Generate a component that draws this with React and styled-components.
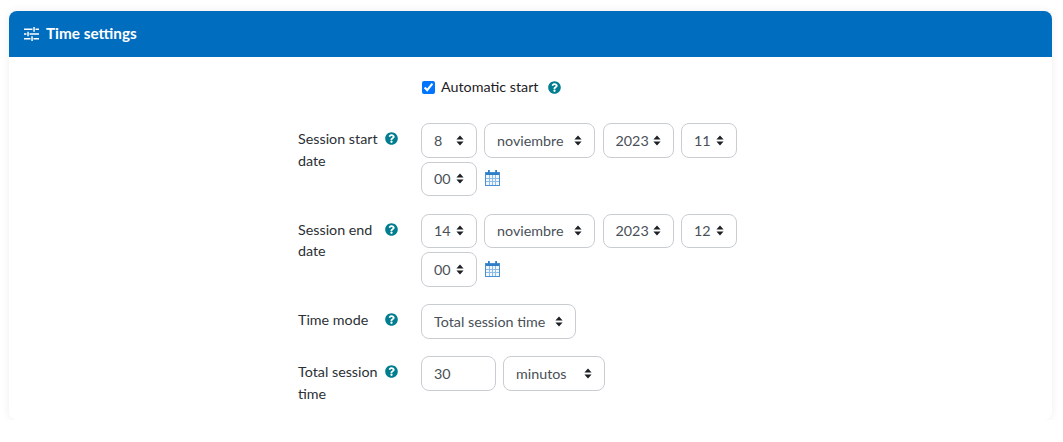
import styled, { createGlobalStyle } from "styled-components";

const GlobalStyle = createGlobalStyle`
  html, body {
    margin: 0;
    background: #fff;
  }
  body {
    font-family: Lato, "Open Sans", "Liberation Sans", sans-serif;
    font-size: 14.300px;
    color: #1d2125;
  }
`;

const caret = encodeURIComponent(
  '<svg xmlns="http://www.w3.org/2000/svg" width="8" height="11" viewBox="0 0 8 11"><path fill="#1d2125" d="M4 0.500 7.600 4.500H0.400ZM4 10.500 0.400 6.500H7.600Z"/></svg>'
);

function HelpIcon() {
  return (
    <Styled.Help viewBox="0 0 512 512" aria-label="Help">
      <path
        fill="#007d8f"
        d="M504 256c0 137-111 248-248 248S8 393 8 256 119 8 256 8s248 111 248 248zM262.700 90c-54.500 0-89.300 23-116.500 63.800-3.500 5.300-2.400 12.400 2.700 16.300l34.700 26.300c5.200 3.900 12.600 3 16.700-2.100 17.900-22.700 30.100-35.800 57.300-35.800 20.400 0 45.700 13.100 45.700 33 0 15-12.400 22.700-32.600 34-23.600 13.200-54.800 29.700-54.800 70.900V300c0 6.600 5.400 12 12 12h56c6.600 0 12-5.400 12-12v-1.300c0-28.600 83.500-29.800 83.500-107.200 0-58.300-60.500-102.500-117.200-102.500zM256 339.200c-24.700 0-44.800 20.100-44.800 44.800s20.100 44.800 44.800 44.800 44.800-20.100 44.800-44.800-20.100-44.800-44.800-44.800z"
      />
    </Styled.Help>
  );
}

function CalendarIcon() {
  return (
    <Styled.Calendar viewBox="0 0 15 17" aria-label="Calendar">
      <rect x="0.500" y="3.500" width="14" height="13" fill="#f2f7fc" stroke="#4a90d0" />
      <path fill="#2f7fc8" d="M1 4h13v2H1z" />
      <path
        stroke="#8dbbe6"
        strokeWidth="1"
        d="M4.500 6v10M7.500 6v10M10.500 6v10M1 9.500h13M1 12.500h13"
      />
      <path fill="#2f7fc8" d="M3 1h1.800v3.500H3zM10.200 1H12v3.500h-1.800z" />
    </Styled.Calendar>
  );
}

function SlidersIcon() {
  return (
    <Styled.Sliders viewBox="0 0 15 14" aria-hidden="true">
      <path
        fill="#fff"
        d="M0 1.500h8.500V3H0zM11.500 1.500H15V3h-3.500zM9.300 0h1.500v4.800H9.300zM0 6.300h2.500v1.500H0zM5.500 6.300H15v1.500H5.500zM3.300 4.700h1.500v4.600H3.300zM0 11h6.500v1.500H0zM9.500 11H15v1.500H9.500zM7.300 9.200h1.500V14H7.300z"
      />
    </Styled.Sliders>
  );
}

function Dropdown({ value, width }) {
  return (
    <Styled.Select $width={width} defaultValue={value}>
      <option>{value}</option>
    </Styled.Select>
  );
}

function FieldLabel({ children }) {
  return (
    <Styled.Label>
      <span>{children}</span>
      <Styled.HelpSlot>
        <HelpIcon />
      </Styled.HelpSlot>
    </Styled.Label>
  );
}

function DateRow({ label, day, hour }) {
  return (
    <Styled.Row>
      <FieldLabel>{label}</FieldLabel>
      <Styled.Controls>
        <Dropdown value={day} width={55.5} />
        <Dropdown value="noviembre" width={111} />
        <Dropdown value="2023" width={71} />
        <Dropdown value={hour} width={55.5} />
        <Dropdown value="00" width={55.5} />
        <CalendarIcon />
      </Styled.Controls>
    </Styled.Row>
  );
}

export default function App() {
  return (
    <>
      <GlobalStyle />
      <Styled.Card>
        <Styled.Header>
          <SlidersIcon />
          <Styled.Title>Time settings</Styled.Title>
        </Styled.Header>
        <Styled.Body>
          <Styled.CheckRow>
            <Styled.Checkbox type="checkbox" defaultChecked />
            <span>Automatic start</span>
            <HelpIcon />
          </Styled.CheckRow>
          <DateRow label="Session start date" day="8" hour="11" />
          <DateRow label="Session end date" day="14" hour="12" />
          <Styled.Row>
            <FieldLabel>Time mode</FieldLabel>
            <Styled.Controls>
              <Dropdown value="Total session time" width={155} />
            </Styled.Controls>
          </Styled.Row>
          <Styled.Row>
            <FieldLabel>Total session time</FieldLabel>
            <Styled.Controls>
              <Styled.Input defaultValue="30" />
              <Dropdown value="minutos" width={102} />
            </Styled.Controls>
          </Styled.Row>
        </Styled.Body>
      </Styled.Card>
    </>
  );
}

const Styled = {
  Card: styled.section`
    margin: 11px 11px 0 9px;
    height: 409px;
    border-radius: 8px;
    background: #fff;
    overflow: hidden;
    box-shadow: 0 0 8px rgba(0, 0, 0, 0.07);
  `,

  Header: styled.header`
    height: 46px;
    box-sizing: border-box;
    padding-left: 15px;
    display: flex;
    align-items: center;
    gap: 7px;
    background: #006dbf;
    color: #fff;
  `,

  Sliders: styled.svg`
    width: 15px;
    height: 14px;
    flex: none;
  `,

  Title: styled.h3`
    margin: 0;
    font-size: 15.300px;
    font-weight: 700;
    line-height: 1;
  `,

  Body: styled.div`
    padding: 21px 0 0 289px;
    display: flex;
    flex-direction: column;
  `,

  CheckRow: styled.label`
    height: 18px;
    margin-left: 124px;
    margin-bottom: 27px;
    display: flex;
    align-items: center;
    gap: 6px;
    line-height: 18px;

    svg {
      margin-left: 4px;
    }
  `,

  Checkbox: styled.input`
    width: 13px;
    height: 13px;
    margin: 0;
    accent-color: #0075ff;
  `,

  Row: styled.div`
    display: grid;
    grid-template-columns: 123px 330px;
    margin-bottom: 17.500px;
  `,

  Label: styled.div`
    position: relative;
    width: 104px;
    padding-top: 5px;
    line-height: 21.500px;
    color: #2b3035;
  `,

  HelpSlot: styled.span`
    position: absolute;
    top: 9px;
    left: 87px;
  `,

  Help: styled.svg`
    display: block;
    width: 13px;
    height: 13px;
    flex: none;
  `,

  Controls: styled.div`
    display: flex;
    flex-wrap: wrap;
    align-items: center;
    align-content: flex-start;
    gap: 4px 7.500px;
  `,

  Select: styled.select`
    appearance: none;
    width: ${({ $width }) => $width}px;
    height: 34.500px;
    box-sizing: border-box;
    padding: 0 12px;
    border: 1px solid #c9cdd1;
    border-radius: 8px;
    background: #fff url("data:image/svg+xml,${caret}") no-repeat right 12px center;
    color: #495057;
    font: inherit;
  `,

  Input: styled.input`
    width: 74.500px;
    height: 34.500px;
    box-sizing: border-box;
    padding: 0 12px;
    border: 1px solid #c9cdd1;
    border-radius: 8px;
    color: #495057;
    font: inherit;
  `,

  Calendar: styled.svg`
    width: 15px;
    height: 17px;
    margin: 0 0 2px 0.500px;
  `,
};
